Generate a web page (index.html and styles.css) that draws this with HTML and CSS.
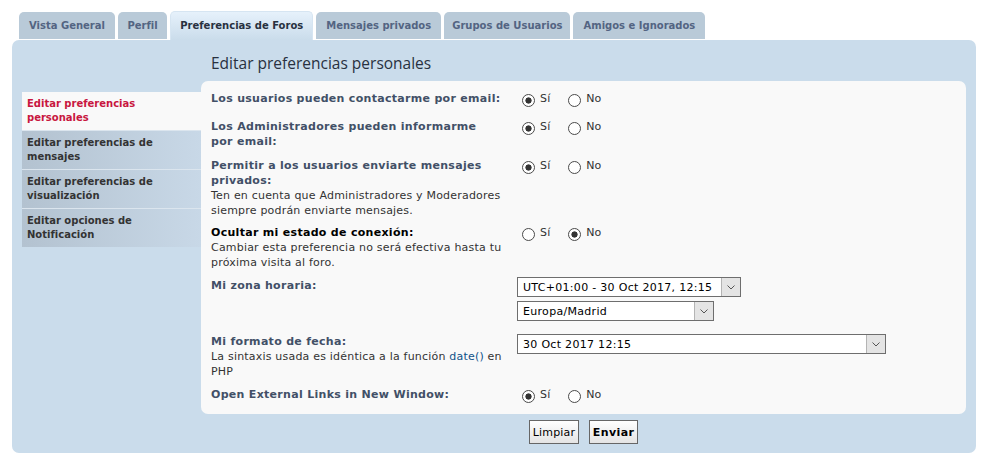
FILE: index.html
```html
<!DOCTYPE html>
<html lang="es">
<head>
    <meta charset="UTF-8">
    <title>Panel de Control de Usuario</title>
    <link rel="stylesheet" href="styles.css">
</head>
<body>
    <div class="page">
        <ul class="tabs">
            <li><a href="#">Vista General</a></li>
            <li class="narrow"><a href="#">Perfil</a></li>
            <li class="active"><a href="#">Preferencias de Foros</a></li>
            <li><a href="#">Mensajes privados</a></li>
            <li class="tight"><a href="#">Grupos de Usuarios</a></li>
            <li><a href="#">Amigos e Ignorados</a></li>
        </ul>

        <div class="panel">
            <ul class="cp-menu">
                <li class="active"><a href="#">Editar preferencias personales</a></li>
                <li><a href="#">Editar preferencias de mensajes</a></li>
                <li><a href="#">Editar preferencias de visualización</a></li>
                <li><a href="#">Editar opciones de Notificación</a></li>
            </ul>

            <div class="cp-main">
                <h2>Editar preferencias personales</h2>
                <form>
                    <div class="box">
                        <dl>
                            <dt><label>Los usuarios pueden contactarme por email:</label></dt>
                            <dd>
                                <label class="opt"><input type="radio" name="viewemail" checked> Sí</label>
                                <label class="opt"><input type="radio" name="viewemail"> No</label>
                            </dd>
                        </dl>
                        <dl class="tall">
                            <dt><label>Los Administradores pueden informarme<br>por email:</label></dt>
                            <dd>
                                <label class="opt"><input type="radio" name="massemail" checked> Sí</label>
                                <label class="opt"><input type="radio" name="massemail"> No</label>
                            </dd>
                        </dl>
                        <dl class="pm">
                            <dt>
                                <label>Permitir a los usuarios enviarte mensajes privados:</label>
                                <span class="explain">Ten en cuenta que Administradores y Moderadores siempre podrán enviarte mensajes.</span>
                            </dt>
                            <dd>
                                <label class="opt"><input type="radio" name="allowpm" checked> Sí</label>
                                <label class="opt"><input type="radio" name="allowpm"> No</label>
                            </dd>
                        </dl>
                        <dl>
                            <dt>
                                <label class="strong">Ocultar mi estado de conexión:</label>
                                <span class="explain">Cambiar esta preferencia no será efectiva hasta tu próxima visita al foro.</span>
                            </dt>
                            <dd>
                                <label class="opt"><input type="radio" name="hideonline"> Sí</label>
                                <label class="opt"><input type="radio" name="hideonline" checked> No</label>
                            </dd>
                        </dl>
                        <dl class="zone">
                            <dt><label>Mi zona horaria:</label></dt>
                            <dd class="fields">
                                <span class="select w-date">
                                    <select><option>UTC+01:00 - 30 Oct 2017, 12:15</option></select>
                                </span>
                                <span class="select w-zone">
                                    <select><option>Europa/Madrid</option></select>
                                </span>
                            </dd>
                        </dl>
                        <dl>
                            <dt>
                                <label>Mi formato de fecha:</label>
                                <span class="explain">La sintaxis usada es idéntica a la función <a href="#">date()</a> en PHP</span>
                            </dt>
                            <dd>
                                <span class="select w-format">
                                    <select><option>30 Oct 2017 12:15</option></select>
                                </span>
                            </dd>
                        </dl>
                        <dl>
                            <dt><label>Open External Links in New Window:</label></dt>
                            <dd>
                                <label class="opt"><input type="radio" name="extlinks" checked> Sí</label>
                                <label class="opt"><input type="radio" name="extlinks"> No</label>
                            </dd>
                        </dl>
                    </div>
                    <div class="submit-buttons">
                        <input type="reset" class="button" value="Limpiar">
                        <input type="submit" class="button primary" value="Enviar">
                    </div>
                </form>
            </div>
        </div>
    </div>
</body>
</html>
```

FILE: styles.css
```css
* {
    margin: 0;
    padding: 0;
    box-sizing: border-box;
}

body {
    font-family: Verdana, "DejaVu Sans", sans-serif;
    font-size: 11px;
    color: #333;
    background: #fff;
}

.page {
    padding: 11px 9px 6px 12px;
}

/* tabs */
.tabs {
    list-style: none;
    display: flex;
    align-items: flex-end;
    gap: 3px;
    height: 29px;
    margin-left: 7px;
}

.tabs a {
    display: block;
    height: 27px;
    line-height: 28px;
    padding: 0 10px;
    margin-bottom: 1px;
    background: #b9cad8;
    border-radius: 5px 5px 0 0;
    color: #536482;
    font-size: 10px;
    font-weight: bold;
    text-decoration: none;
}

.tabs .narrow a {
    padding: 0 9.5px;
}

.tabs .tight a {
    padding: 0 8px;
}

.tabs .active a {
    height: 29px;
    line-height: 27px;
    padding: 0 9px;
    margin-bottom: 0;
    background: linear-gradient(#e6f1fb, #cadceb);
    border: 1px solid #d6e5f2;
    border-bottom: none;
    color: #28313f;
}

/* main panel */
.panel {
    background: #cadceb;
    border-radius: 7px;
    padding: 0 10px 9px;
    display: grid;
    grid-template-columns: 179px 1fr;
}

.cp-menu {
    list-style: none;
    margin-top: 52px;
    align-self: start;
}

.cp-menu li + li {
    border-top: 1px solid #dbe5ee;
}

.cp-menu a {
    display: block;
    padding: 5px 12px 5px 5px;
    line-height: 14px;
    font-size: 10px;
    font-weight: bold;
    color: #333;
    text-decoration: none;
    background: linear-gradient(to right, #b3c2d0, #c8d8e7);
}

.cp-menu .active a {
    background: #f9f9f9;
    color: #c8173f;
}

.cp-main h2 {
    font-family: "Open Sans", "DejaVu Sans", sans-serif;
    font-size: 15.5px;
    font-weight: normal;
    line-height: 20px;
    color: #28313f;
    padding: 13px 0 8px 10px;
}

.box {
    background: #f9f9f9;
    border-radius: 7px;
    padding: 10px 10px 7px;
    letter-spacing: 0.2px;
}

dl {
    display: flex;
    margin-bottom: 8px;
}

dl:last-child {
    margin-bottom: 0;
}

dl.tall {
    margin-bottom: 9px;
}

dl.pm {
    margin-bottom: 7px;
}

dt {
    width: 306px;
    padding-right: 10px;
    line-height: 15px;
}

dt label {
    display: block;
    font-weight: bold;
    letter-spacing: 0.3px;
    color: #425067;
}

dt label.strong {
    color: #000;
}

.explain {
    display: block;
    color: #333;
}

.explain a {
    color: #105289;
    text-decoration: none;
}

dd {
    min-height: 20px;
    line-height: 15px;
}

dd.fields {
    margin-top: -1px;
}

.opt {
    display: inline-flex;
    align-items: flex-start;
    margin-right: 9px;
    color: #333;
}

.opt input {
    appearance: none;
    width: 13px;
    height: 13px;
    margin: 3px 5px 0 5px;
    border: 1px solid #4a4a4a;
    border-radius: 50%;
    background: #fff;
}

.opt input:checked {
    background: radial-gradient(circle, #333 0 2.8px, #fff 3.4px);
}

/* selects */
.select {
    position: relative;
    display: block;
    height: 20px;
}

.select select {
    appearance: none;
    width: 100%;
    height: 20px;
    border: 1px solid #6e6e6e;
    background: #fff;
    font-family: inherit;
    font-size: 11px;
    letter-spacing: 0.3px;
    color: #000;
    padding: 0 5px;
}

.select::after {
    content: "";
    position: absolute;
    top: 1px;
    right: 1px;
    width: 18px;
    height: 18px;
    border-left: 1px solid #b4b4b4;
    background: #e4e4e4 url("data:image/svg+xml;utf8,<svg xmlns='http://www.w3.org/2000/svg' width='8' height='5'><path d='M0.5 0.5L4 4L7.5 0.5' fill='none' stroke='%23555' stroke-width='1'/></svg>") no-repeat center;
    pointer-events: none;
}

.w-date { width: 224px; }
.w-zone { width: 197px; margin-top: 4px; }
.w-format { width: 369px; }

.zone {
    margin-bottom: 13px;
}

/* buttons */
.submit-buttons {
    text-align: center;
    margin-top: 6px;
}

.button {
    height: 24px;
    padding: 0 3px;
    margin: 0 3px;
    border: 1px solid #666;
    background: linear-gradient(#fff, #e4e4e4);
    font-family: inherit;
    font-size: 11px;
    letter-spacing: 0.2px;
    color: #000;
}

.button.primary {
    font-weight: bold;
    letter-spacing: 0.4px;
}
```
